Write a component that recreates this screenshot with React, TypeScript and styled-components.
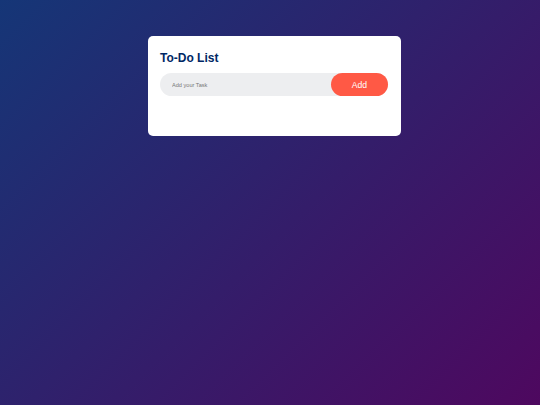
import styled, { createGlobalStyle } from "styled-components";
import { useState } from "react";

const GlobalStyle = createGlobalStyle`
  * {
    box-sizing: border-box;
  }
  html, body {
    margin: 0;
    padding: 0;
  }
  body {
    font-family: "Liberation Sans", Arial, sans-serif;
  }
`;

const Wrapper = styled.div`
  width: 100%;
  min-height: 100vh;
  background: linear-gradient(135deg, #153677, #4e085f);
  padding: 36px 0 0 148px;
`;

const Card = styled.div`
  width: 253px;
  height: 100px;
  background: #fff;
  border-radius: 5px;
  padding: 15px 13px 0 12px;
`;

const Title = styled.h2`
  margin: 0 0 8px;
  color: #002765;
  font-size: 12px;
  font-weight: 700;
  line-height: 14px;
`;

const Row = styled.div`
  display: flex;
  align-items: center;
  height: 23px;
  background: #edeef0;
  border-radius: 12px;
  padding-left: 12px;
`;

const Input = styled.input`
  flex: 1;
  min-width: 0;
  border: none;
  outline: none;
  background: transparent;
  font-family: "Liberation Sans", Arial, sans-serif;
  font-size: 5.6px;
  color: #333;
  padding: 0;
  &::placeholder {
    color: #777;
  }
`;

const Button = styled.button`
  width: 57px;
  height: 23px;
  border: none;
  border-radius: 12px;
  background: #ff5945;
  color: #fff;
  font-family: "Liberation Sans", Arial, sans-serif;
  font-size: 8.6px;
  cursor: pointer;
  padding: 0;
`;

function App() {
  const [task, setTask] = useState("");

  return (
    <Wrapper>
      <GlobalStyle />
      <Card>
        <Title>To-Do List</Title>
        <Row>
          <Input
            value={task}
            onChange={(e) => setTask(e.target.value)}
            placeholder="Add your Task"
          />
          <Button onClick={() => setTask("")}>Add</Button>
        </Row>
      </Card>
    </Wrapper>
  );
}

export default App;
